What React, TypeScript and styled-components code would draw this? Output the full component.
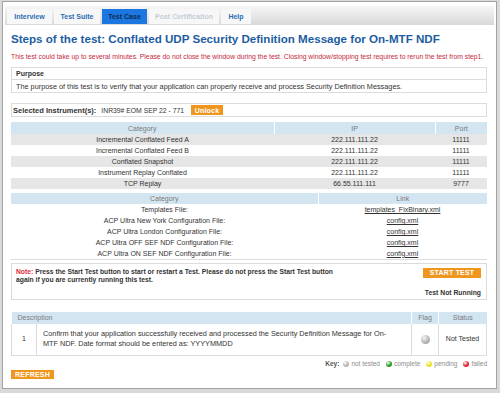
import React from "react";
import styled, { createGlobalStyle } from "styled-components";

const Global = createGlobalStyle`
  html, body { margin: 0; padding: 0; background: #d9d9d9; }
  body { font-family: "Liberation Sans", Arial, sans-serif; }
  * { box-sizing: border-box; }
`;

const Frame = styled.div`
  margin: 1px 3px 0 2px;
  height: 388px;
  background: #fff;
  border: 1px solid #a3a3a3;
  display: flex;
  flex-direction: column;
`;

const TabBar = styled.div`
  margin: 4px 2px 0 2px;
  height: 19px;
  padding: 2px 0 0 2px;
  background: linear-gradient(#f6f6f6, #d9d9d9);
  display: flex;
  gap: 2px;
  align-items: flex-end;
`;

const Tab = styled.div<{ $active?: boolean; $disabled?: boolean; $w: number }>`
  width: ${(p) => p.$w}px;
  height: 15px;
  display: flex;
  align-items: center;
  justify-content: center;
  font-size: 7px;
  font-weight: bold;
  background: ${(p) => (p.$active ? "#1c78e0" : "#f7f7f7")};
  color: ${(p) => (p.$active ? "#0b2c57" : p.$disabled ? "#c5cdd6" : "#2c6db5")};
  margin-bottom: 1px;
`;

const Content = styled.div`
  padding: 0 9px 0 8px;
  display: flex;
  flex-direction: column;
`;

const Title = styled.h1`
  margin: 7px 0 0 0;
  font-size: 11.6px;
  line-height: 14px;
  font-weight: bold;
  color: #1d5d9f;
  white-space: nowrap;
`;

const Warning = styled.p`
  margin: 7px 0 0 0;
  font-size: 6.8px;
  line-height: 8px;
  color: #c4283e;
  white-space: nowrap;
`;

const Panel = styled.div`
  margin: 6px 0 0 0;
  border: 1px solid #dcdcdc;
`;

const PanelHead = styled.div`
  height: 12px;
  padding-left: 4px;
  display: flex;
  align-items: center;
  font-size: 7px;
  font-weight: bold;
  color: #333;
  border-bottom: 1px solid #dcdcdc;
`;

const PanelBody = styled.div`
  height: 12px;
  padding-left: 4px;
  display: flex;
  align-items: center;
  font-size: 7.3px;
  color: #333;
  white-space: nowrap;
`;

const InstrumentBar = styled.div`
  margin: 10px 0 0 0;
  height: 14px;
  border: 1px solid #dcdcdc;
  padding-left: 1px;
  display: flex;
  align-items: center;
  color: #333;
`;

const Label = styled.span`
  font-size: 7.5px;
  font-weight: bold;
  margin-right: 5px;
`;

const Value = styled.span`
  font-size: 6.8px;
  margin-right: 7px;
`;

const OrangeButton = styled.span<{ $w: number }>`
  width: ${(p) => p.$w}px;
  height: 10px;
  display: inline-flex;
  align-items: center;
  justify-content: center;
  background: #ef961f;
  color: #fff;
  font-size: 7px;
  font-weight: bold;
  letter-spacing: 0.2px;
`;

const Table = styled.table<{ $mt: number }>`
  margin: ${(p) => p.$mt}px 0 0 0;
  width: 100%;
  border-collapse: collapse;
  font-size: 7px;
  color: #333;
  table-layout: fixed;
`;

const Th = styled.th<{ $w?: number; $align?: string; $h?: number }>`
  ${(p) => (p.$w ? `width: ${p.$w}px;` : "")}
  height: ${(p) => p.$h || 11}px;
  padding: 0 6px;
  background: #d4e5f2;
  color: #7a7a7a;
  font-weight: normal;
  text-align: ${(p) => p.$align || "center"};
  border-right: 1px solid #fff;
  &:last-child { border-right: none; }
`;

const Tr = styled.tr<{ $shade?: boolean }>`
  background: ${(p) => (p.$shade ? "#e6e6e6" : "#fff")};
`;

const Td = styled.td`
  height: 11px;
  padding: 0;
  text-align: center;
`;

const LinkText = styled.span`
  color: #333;
  text-decoration: underline;
`;

const LinkTable = styled(Table)`
  border-bottom: 1px solid #dcdcdc;
`;

const NoteBox = styled.div`
  margin: 3px 0 0 0;
  height: 37px;
  border: 1px solid #dcdcdc;
  padding: 4px 5px 0 4px;
  display: grid;
  grid-template-columns: 1fr auto;
  grid-template-rows: auto 1fr;
  font-size: 6.75px;
  font-weight: bold;
  color: #333;
`;

const NoteText = styled.div`
  line-height: 8px;
  white-space: nowrap;
`;

const NoteLabel = styled.span`
  color: #e0283a;
`;

const Status = styled.div`
  grid-column: 1 / 3;
  align-self: end;
  justify-self: end;
  margin-bottom: 3px;
  font-size: 6.8px;
`;

const StepsTable = styled.table`
  margin: 12px 0 0 0;
  width: 100%;
  border-collapse: collapse;
  table-layout: fixed;
  font-size: 7px;
  color: #333;
`;

const StepTd = styled.td<{ $align?: string; $fs?: number }>`
  border: 1px solid #dcdcdc;
  border-top: none;
  height: 32px;
  padding: 0 6px;
  text-align: ${(p) => p.$align || "center"};
  font-size: ${(p) => p.$fs || 7}px;
  line-height: 10px;
  white-space: nowrap;
`;

const Sphere = styled.span`
  display: inline-block;
  width: 9px;
  height: 9px;
  border-radius: 50%;
  background: radial-gradient(circle at 35% 30%, #f4f4f4, #a8a8a8 70%, #8a8a8a);
  vertical-align: middle;
`;

const KeyRow = styled.div`
  margin: 4px 0 0 0;
  align-self: flex-end;
  display: flex;
  align-items: center;
  gap: 2px;
  font-size: 6.5px;
  color: #8c8c8c;
`;

const KeyLabel = styled.span`
  font-weight: bold;
  color: #555;
  margin-right: 2px;
`;

const KeyItem = styled.span`
  display: inline-flex;
  align-items: center;
  gap: 2px;
  margin-right: 4px;
  &:last-child { margin-right: 0; }
`;

const Dot = styled.span<{ $c: string }>`
  width: 6px;
  height: 6px;
  border-radius: 50%;
  background: radial-gradient(circle at 35% 30%, #fff 0%, ${(p) => p.$c} 55%);
`;

const Refresh = styled(OrangeButton)`
  margin: 3px 0 0 0;
  height: 9px;
`;

const feeds = [
  ["Incremental Conflated Feed A", "222.111.111.22", "11111"],
  ["Incremental Conflated Feed B", "222.111.111.22", "11111"],
  ["Conflated Snapshot", "222.111.111.22", "11111"],
  ["Instrument Replay Conflated", "222.111.111.22", "11111"],
  ["TCP Replay", "66.55.111.111", "9777"],
];

const files = [
  ["Templates File:", "templates_FixBinary.xml"],
  ["ACP Ultra New York Configuration File:", "config.xml"],
  ["ACP Ultra London Configuration File:", "config.xml"],
  ["ACP Ultra OFF SEF NDF Configuration File:", "config.xml"],
  ["ACP Ultra ON SEF NDF Configuration File:", "config.xml"],
];

export default function App() {
  return (
    <>
      <Global />
      <Frame>
        <TabBar>
          <Tab $w={45}>Interview</Tab>
          <Tab $w={46}>Test Suite</Tab>
          <Tab $w={45} $active>Test Case</Tab>
          <Tab $w={70} $disabled>Post Certification</Tab>
          <Tab $w={30}>Help</Tab>
        </TabBar>
        <Content>
          <Title>Steps of the test: Conflated UDP Security Definition Message for On-MTF NDF</Title>
          <Warning>
            This test could take up to several minutes. Please do not close the window during the test. Closing window/stopping test requires to rerun the test from step1.
          </Warning>
          <Panel>
            <PanelHead>Purpose</PanelHead>
            <PanelBody>
              The purpose of this test is to verify that your application can properly receive and process Security Definition Messages.
            </PanelBody>
          </Panel>
          <InstrumentBar>
            <Label>Selected Instrument(s):</Label>
            <Value>INR39# EOM SEP 22 - 771</Value>
            <OrangeButton $w={32}>Unlock</OrangeButton>
          </InstrumentBar>
          <Table $mt={5}>
            <thead>
              <tr>
                <Th $w={263} $h={12}>Category</Th>
                <Th $w={161} $h={12}>IP</Th>
                <Th $h={12}>Port</Th>
              </tr>
            </thead>
            <tbody>
              {feeds.map((f, i) => (
                <Tr key={f[0]} $shade={i % 2 === 0}>
                  <Td>{f[0]}</Td>
                  <Td>{f[1]}</Td>
                  <Td>{f[2]}</Td>
                </Tr>
              ))}
            </tbody>
          </Table>
          <LinkTable $mt={4}>
            <thead>
              <tr>
                <Th $w={307}>Category</Th>
                <Th>Link</Th>
              </tr>
            </thead>
            <tbody>
              {files.map((f) => (
                <Tr key={f[0]}>
                  <Td>{f[0]}</Td>
                  <Td>
                    <LinkText>{f[1]}</LinkText>
                  </Td>
                </Tr>
              ))}
            </tbody>
          </LinkTable>
          <NoteBox>
            <NoteText>
              <NoteLabel>Note:</NoteLabel> Press the Start Test button to start or restart a Test. Please do not press the Start Test button
              <br />
              again if you are currently running this test.
            </NoteText>
            <OrangeButton $w={58}>START TEST</OrangeButton>
            <Status>Test Not Running</Status>
          </NoteBox>
          <StepsTable>
            <colgroup>
              <col style={{ width: 25 }} />
              <col />
              <col style={{ width: 27 }} />
              <col style={{ width: 48 }} />
            </colgroup>
            <thead>
              <tr>
                <Th colSpan={2} $align="left" $h={12}>Description</Th>
                <Th $h={12}>Flag</Th>
                <Th $h={12}>Status</Th>
              </tr>
            </thead>
            <tbody>
              <tr>
                <StepTd>1</StepTd>
                <StepTd $align="left" $fs={7.3}>
                  Confirm that your application successfully received and processed the Security Definition Message for On-
                  <br />
                  MTF NDF. Date format should be entered as: YYYYMMDD
                </StepTd>
                <StepTd>
                  <Sphere />
                </StepTd>
                <StepTd>Not Tested</StepTd>
              </tr>
            </tbody>
          </StepsTable>
          <KeyRow>
            <KeyLabel>Key:</KeyLabel>
            <KeyItem><Dot $c="#b5b5b5" />not tested</KeyItem>
            <KeyItem><Dot $c="#1e9a1e" />complete</KeyItem>
            <KeyItem><Dot $c="#e8e020" />pending</KeyItem>
            <KeyItem><Dot $c="#e0202e" />failed</KeyItem>
          </KeyRow>
          <Refresh $w={43}>REFRESH</Refresh>
        </Content>
      </Frame>
    </>
  );
}
